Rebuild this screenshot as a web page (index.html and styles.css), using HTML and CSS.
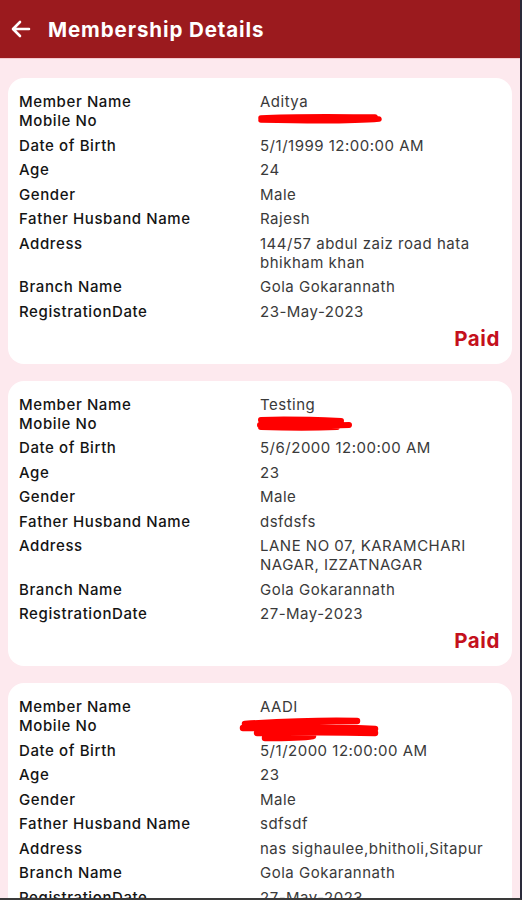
FILE: index.html
```html
<!DOCTYPE html>
<html>
<head>
<meta charset="utf-8">
<link rel="stylesheet" href="styles.css">
</head>
<body>
<div class="screen">
  <header class="appbar">
    <svg class="back" width="24" height="24" viewBox="0 0 24 24"><path d="M20 12H5M11 5l-7 7 7 7" fill="none" stroke="#fff" stroke-width="2.6" stroke-linecap="round" stroke-linejoin="round"/></svg>
    <h1 class="title">Membership Details</h1>
  </header>
  <main class="list">
    <section class="card">
      <div class="grid">
        <div class="k">Member Name</div><div class="v">Aditya</div>
        <div class="k">Mobile No</div><div class="v redact"><svg width="130" height="12" viewBox="0 0 130 12"><path d="M4 5 C40 3 90 4 118 4 M4 7 C50 8 100 8 122 6" fill="none" stroke="#ff0000" stroke-width="5.5" stroke-linecap="round"/></svg></div>
      </div>
      <div class="grid rows">
        <div class="k">Date of Birth</div><div class="v">5/1/1999 12:00:00 AM</div>
        <div class="k">Age</div><div class="v">24</div>
        <div class="k">Gender</div><div class="v">Male</div>
        <div class="k">Father Husband Name</div><div class="v">Rajesh</div>
        <div class="k">Address</div><div class="v">144/57 abdul zaiz road hata bhikham khan</div>
        <div class="k">Branch Name</div><div class="v">Gola Gokarannath</div>
        <div class="k">RegistrationDate</div><div class="v">23-May-2023</div>
      </div>
      <div class="status">Paid</div>
    </section>
    <section class="card">
      <div class="grid">
        <div class="k">Member Name</div><div class="v">Testing</div>
        <div class="k">Mobile No</div><div class="v redact"><svg width="130" height="16" viewBox="0 0 130 16"><path d="M4 4 C30 3 60 4 84 5 M3 9 C40 10 70 10 92 9 M4 11 C30 12 60 12 80 11" fill="none" stroke="#ff0000" stroke-width="6" stroke-linecap="round"/></svg></div>
      </div>
      <div class="grid rows">
        <div class="k">Date of Birth</div><div class="v">5/6/2000 12:00:00 AM</div>
        <div class="k">Age</div><div class="v">23</div>
        <div class="k">Gender</div><div class="v">Male</div>
        <div class="k">Father Husband Name</div><div class="v">dsfdsfs</div>
        <div class="k">Address</div><div class="v">LANE NO 07, KARAMCHARI NAGAR, IZZATNAGAR</div>
        <div class="k">Branch Name</div><div class="v">Gola Gokarannath</div>
        <div class="k">RegistrationDate</div><div class="v">27-May-2023</div>
      </div>
      <div class="status">Paid</div>
    </section>
    <section class="card">
      <div class="grid">
        <div class="k">Member Name</div><div class="v">AADI</div>
        <div class="k">Mobile No</div><div class="v redact"><svg width="150" height="26" viewBox="0 0 150 26"><path d="M-12 6 C20 4 60 2 100 3 M-14 10 C30 9 80 9 118 11 M0 15 C40 14 80 14 118 15 M8 20 C30 20 50 19 56 18" fill="none" stroke="#ff0000" stroke-width="6.5" stroke-linecap="round"/></svg></div>
      </div>
      <div class="grid rows">
        <div class="k">Date of Birth</div><div class="v">5/1/2000 12:00:00 AM</div>
        <div class="k">Age</div><div class="v">23</div>
        <div class="k">Gender</div><div class="v">Male</div>
        <div class="k">Father Husband Name</div><div class="v">sdfsdf</div>
        <div class="k">Address</div><div class="v">nas sighaulee,bhitholi,Sitapur</div>
        <div class="k">Branch Name</div><div class="v">Gola Gokarannath</div>
        <div class="k">RegistrationDate</div><div class="v">27-May-2023</div>
      </div>
      <div class="status">Paid</div>
    </section>
  </main>
</div>
</body>
</html>
```
FILE: styles.css
```css
html, body {
  margin: 0;
  padding: 0;
  height: 900px;
  overflow: hidden;
}
body {
  background: #fde9ee;
  font-family: "Inter", "DejaVu Sans", sans-serif;
  border-right: 2px solid #2a2a3a;
  border-bottom: 2px solid #3a3a3a;
  box-sizing: border-box;
}
.screen {
  height: 100%;
  overflow: hidden;
}
.appbar {
  height: 58px;
  background: #9b1a1e;
  display: flex;
  align-items: center;
  gap: 15px;
  padding-left: 9px;
  border-bottom: 1px solid #f3c9cf;
}
.back { flex: none; }
.title {
  margin: 0;
  color: #fff;
  font-size: 20.5px;
  font-weight: 700;
  letter-spacing: 0.9px;
}
.list {
  padding: 19px 8px 0 8px;
  display: flex;
  flex-direction: column;
  gap: 17px;
}
.card {
  background: #fff;
  border-radius: 16px;
  padding: 14px 11px 13px 11px;
}
.grid {
  display: grid;
  grid-template-columns: 241px 1fr;
  line-height: 19px;
  font-size: 15px;
}
.grid.rows {
  row-gap: 5.5px;
  margin-top: 5.5px;
}
.k {
  color: #141414;
  font-weight: 500;
  letter-spacing: 0.6px;
}
.v {
  color: #3a3a3a;
  font-weight: 400;
  letter-spacing: 0.5px;
}
.redact {
  position: relative;
  height: 19px;
}
.redact svg {
  position: absolute;
  left: -3px;
  top: 2px;
  overflow: visible;
}
.status {
  text-align: right;
  color: #c4101c;
  font-weight: 700;
  font-size: 20.5px;
  line-height: 24px;
  margin-top: 6px;
  padding-right: 1px;
  letter-spacing: 0.6px;
}
```
